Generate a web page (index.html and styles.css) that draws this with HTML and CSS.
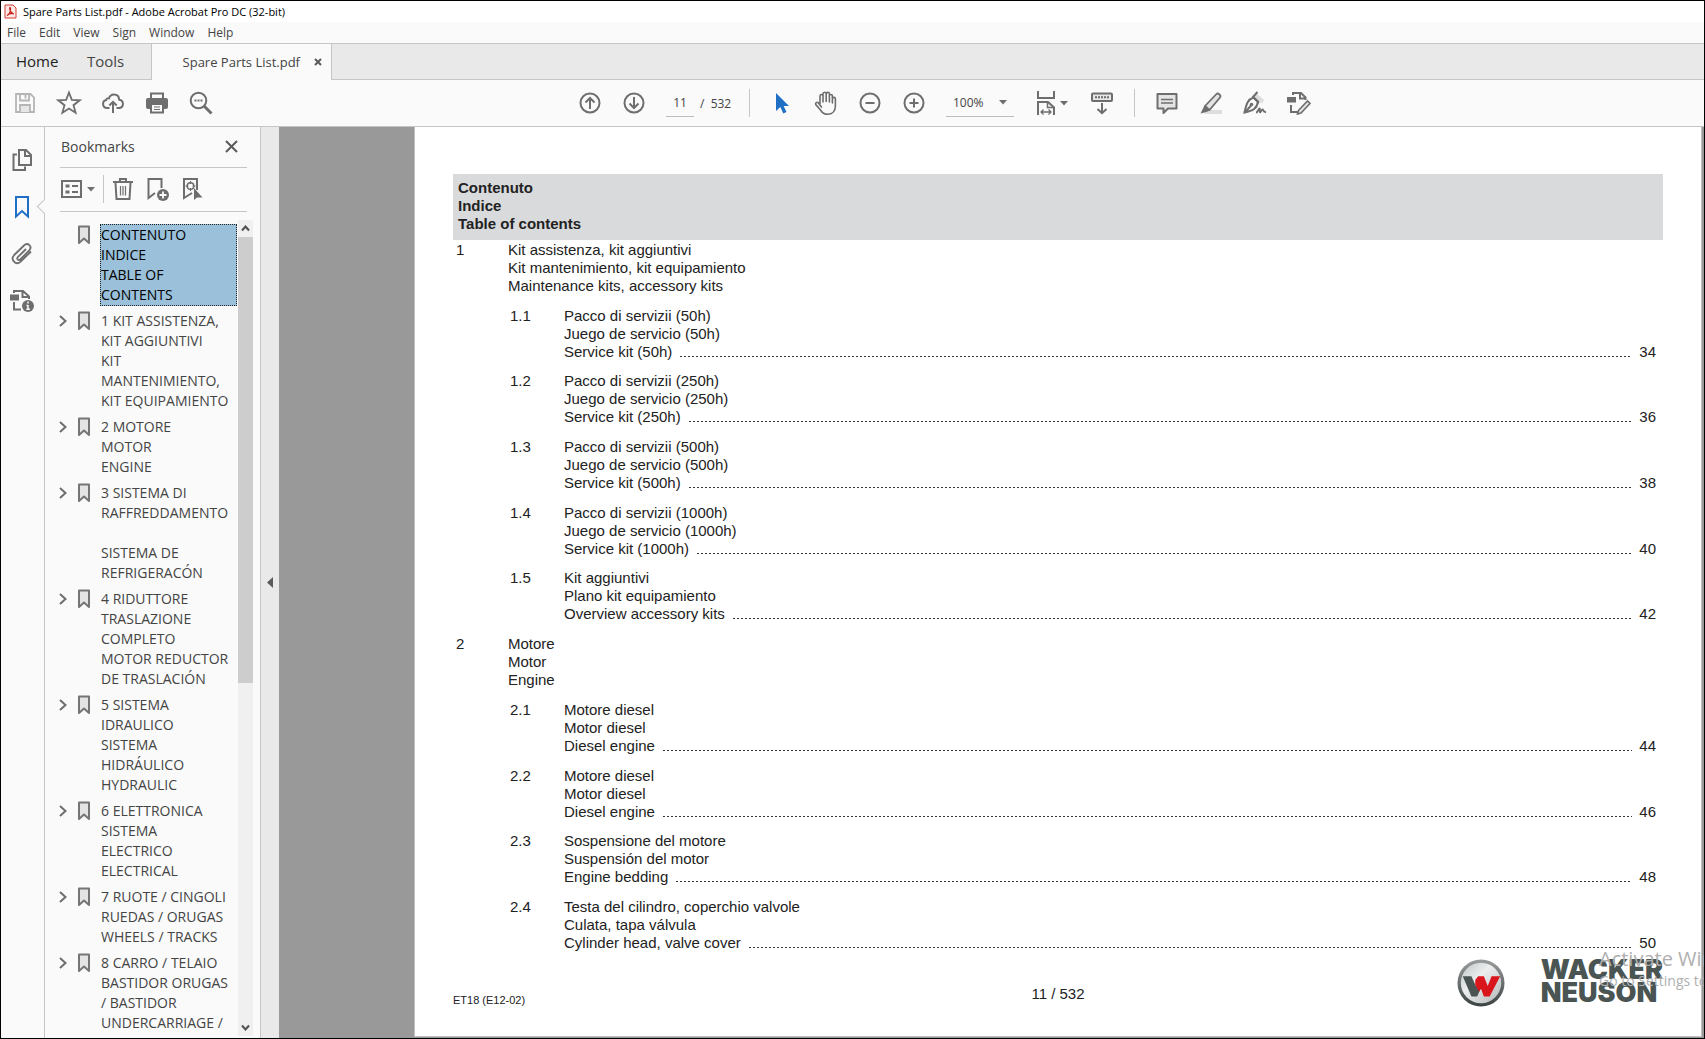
FILE: index.html
```html
<!DOCTYPE html>
<html lang="en">
<head>
<meta charset="utf-8">
<title>Spare Parts List.pdf - Adobe Acrobat Pro DC (32-bit)</title>
<link rel="stylesheet" href="styles.css">
</head>
<body>
<svg class="defs" aria-hidden="true">
  <symbol id="mark" viewBox="0 0 14 20"><path d="M2 1.5h10v16.5l-5-4.5-5 4.5z" fill="#e4e4e4" stroke="#757575" stroke-width="2" stroke-linejoin="round"/></symbol>
  <symbol id="chev" viewBox="0 0 8 12"><path d="M1 1l5.500 5L1 11" fill="none" stroke="#6e6e6e" stroke-width="2"/></symbol>
  <symbol id="caret" viewBox="0 0 8 5"><path d="M0 0h8L4 4.500z" fill="#6e6e6e"/></symbol>
</svg>

<header class="titlebar">
  <svg class="app-icon" width="13" height="15" viewBox="0 0 13 15"><path d="M1 1h8l3 3v10H1z" fill="#fbe9e7" stroke="#d33a32"/><path d="M3 11.500c2-1 3.500-4 3.500-7 0-1.500-1.200-1-.8.5.6 2.500 2.300 4.500 4.300 4.800M3 11.500c1.500-1.500 4-2.300 6.500-2" fill="none" stroke="#c8231b" stroke-width="1.200"/></svg>
  <span>Spare Parts List.pdf - Adobe Acrobat Pro DC (32-bit)</span>
</header>

<nav class="menubar">
  <button>File</button><button>Edit</button><button>View</button><button>Sign</button><button>Window</button><button>Help</button>
</nav>

<div class="tabs">
  <button class="tab home">Home</button>
  <button class="tab tools">Tools</button>
  <div class="tab-doc">
    <span>Spare Parts List.pdf</span>
    <button class="tab-close" aria-label="Close tab"><svg width="8" height="8" viewBox="0 0 8 8"><path d="M1 1l6 6M7 1L1 7" stroke="#5a5a5a" stroke-width="2"/></svg></button>
  </div>
</div>

<div class="toolbar">
  <div class="tool-group">
    <button class="tool" aria-label="Save"><svg width="24" height="24" viewBox="0 0 24 24" fill="none" stroke="#b5b5b5" stroke-width="1.800"><path d="M3 3h14.500L21 6.500V21H3z"/><path d="M7 3v6.500h9V3M12.500 4v3.500" /><path d="M7 21v-7h10v7" fill="#e6e6e6"/></svg></button>
    <button class="tool" aria-label="Star"><svg width="26" height="26" viewBox="0 0 26 26"><path d="M13 2.500l2.800 7.400 7.900.4-6.200 4.900 2.100 7.600-6.600-4.300-6.600 4.300 2.100-7.600-6.200-4.900 7.900-.4z" fill="none" stroke="#6e6e6e" stroke-width="1.800"/></svg></button>
    <button class="tool" aria-label="Upload"><svg width="24" height="24" viewBox="0 0 24 24" fill="none" stroke="#6e6e6e" stroke-width="2"><path d="M8.500 17H6a4 4 0 0 1-.8-7.900C5.500 7.500 7 7 8 7.300 8.800 4.700 10.500 3.500 13 3.500c3 0 5 2 5.200 5.200A4.200 4.200 0 0 1 18.500 17h-3"/><path d="M12 22V11M8.300 14.500L12 10.800l3.700 3.700"/></svg></button>
    <button class="tool" aria-label="Print"><svg width="24" height="24" viewBox="0 0 24 24"><path d="M6 2.500h12v6H6z" fill="#fafafa" stroke="#6e6e6e" stroke-width="2"/><rect x="1" y="7" width="22" height="11" rx="2" fill="#6e6e6e"/><rect x="6" y="13" width="12" height="8.500" fill="#fafafa" stroke="#6e6e6e" stroke-width="2"/><path d="M9 16h6M9 18.500h6" stroke="#6e6e6e"/></svg></button>
    <button class="tool" aria-label="Find"><svg width="24" height="24" viewBox="0 0 24 24" fill="none" stroke="#6e6e6e"><circle cx="9.500" cy="9.500" r="7.800" stroke-width="2"/><path d="M15 15l7.500 7.500" stroke-width="3"/><path d="M5.500 9.500h8" stroke-width="1.800" stroke-dasharray="2 1"/></svg></button>
  </div>

  <div class="tool-group main">
    <button class="tool" aria-label="Previous page"><svg width="24" height="24" viewBox="0 0 24 24" fill="none" stroke="#6e6e6e" stroke-width="2"><circle cx="12" cy="12" r="9.500"/><path d="M12 18V7M7.500 11.500L12 7l4.500 4.500"/></svg></button>
    <button class="tool" aria-label="Next page"><svg width="24" height="24" viewBox="0 0 24 24" fill="none" stroke="#6e6e6e" stroke-width="2"><circle cx="12" cy="12" r="9.500"/><path d="M12 6v11M7.500 12.500L12 17l4.500-4.500"/></svg></button>
    <input class="page-input" type="text" value="11" aria-label="Page number">
    <span class="page-total">/&nbsp; 532</span>
    <span class="sep"></span>
    <button class="tool" aria-label="Select"><svg width="24" height="24" viewBox="0 0 24 24"><path d="M6 2v18l4.300-4 3 6.500 3.200-1.500-2.900-6H19z" fill="#1f6fc4"/></svg></button>
    <button class="tool" aria-label="Pan"><svg width="24" height="26" viewBox="0 0 24 26"><path d="M6 14V6.200c0-2.200 3-2.200 3 0V12 4c0-2.300 3.200-2.300 3.200 0v7.500V4c0-2.200 3.200-2.200 3.200 0v8V6c0-2 3-2 3 0v7-4.200c0-1.900 3-1.900 3 0V16c0 5-3 8.300-7.900 8.300-3.500 0-5.500-1.800-7-4.300L1.800 14.600c-.9-1.700 1.200-3.200 2.600-1.700L7.500 17" fill="none" stroke="#6e6e6e" stroke-width="1.600" stroke-linejoin="round" stroke-linecap="round"/></svg></button>
    <button class="tool" aria-label="Zoom out"><svg width="24" height="24" viewBox="0 0 24 24" fill="none" stroke="#6e6e6e" stroke-width="2"><circle cx="12" cy="12" r="9.500"/><path d="M7.500 12h9"/></svg></button>
    <button class="tool" aria-label="Zoom in"><svg width="24" height="24" viewBox="0 0 24 24" fill="none" stroke="#6e6e6e" stroke-width="2"><circle cx="12" cy="12" r="9.500"/><path d="M7.500 12h9M12 7.500v9"/></svg></button>
    <label class="zoom"><select aria-label="Zoom level"><option>100%</option></select><svg width="8" height="5"><use href="#caret"/></svg></label>
    <button class="tool fit" aria-label="Fit width"><svg width="20" height="26" viewBox="0 0 20 26" fill="none" stroke="#6e6e6e" stroke-width="2"><path d="M2 1v7h16V1M2 25V12h10l6 5.500V25"/><path d="M11.500 12v5.500H18" stroke-width="1.500"/><path d="M5 22h10M7.500 19.500L5 22l2.500 2.500M12.500 19.500L15 22l-2.500 2.500" stroke-width="1.300"/></svg><svg width="8" height="5"><use href="#caret"/></svg></button>
    <button class="tool" aria-label="Read mode"><svg width="24" height="24" viewBox="0 0 24 24" fill="none" stroke="#6e6e6e" stroke-width="2"><rect x="2" y="2.500" width="20" height="7.500" rx="1" fill="#e6e6e6"/><path d="M5 6.200h14" stroke-dasharray="2 1"/><path d="M12 12v10M7.500 18l4.500 4.200 4.500-4.200"/></svg></button>
    <span class="sep"></span>
    <button class="tool" aria-label="Comment"><svg width="24" height="24" viewBox="0 0 24 24"><path d="M2.500 3h19v14.500H13L8.500 22v-4.500h-6z" fill="#e4e4e4" stroke="#6e6e6e" stroke-width="2" stroke-linejoin="round"/><path d="M6 8.500h12M6 12h12" stroke="#6e6e6e" stroke-width="1.500"/></svg></button>
    <button class="tool" aria-label="Highlight"><svg width="24" height="24" viewBox="0 0 24 24"><path d="M9 19h14v4H5z" fill="#dedede"/><path d="M6 15L17.500 3c1.500-1.500 5 1.500 3.500 3.500L10.500 19z" fill="#e4e4e4" stroke="#6e6e6e" stroke-width="1.800"/><path d="M5.500 14.500l5.500 4.700L7.500 21l-6 1.500z" fill="#6e6e6e"/></svg></button>
    <button class="tool" aria-label="Sign"><svg width="24" height="24" viewBox="0 0 24 24"><path d="M13 2l8 7-2 3.500-8-7z" fill="#dedede"/><path d="M10.500 6.500C4.500 8.500 3.500 13 1.500 21.500c8.500-1.500 12.500-4 13.500-11z" fill="#fafafa" stroke="#6e6e6e" stroke-width="2"/><path d="M14.500 1L10 6l6 6M2 21.500l6-7" fill="none" stroke="#6e6e6e" stroke-width="2"/><circle cx="8.500" cy="13.500" r="1.800" fill="#6e6e6e"/><path d="M13 21.500c2 0 2.500-4 3.500-4s-.5 4 .7 3.800 1.300-3 2.300-3 0 3 3.500 2.700" fill="none" stroke="#6e6e6e" stroke-width="1.800"/></svg></button>
    <button class="tool" aria-label="Edit"><svg width="24" height="24" viewBox="0 0 24 24" fill="none" stroke="#6e6e6e" stroke-width="2"><path d="M6 4V2h8l4.500 4.500V9M13 2v5.500h6M4 14v7h7"/><rect x="0" y="6" width="9" height="5.500" fill="#6e6e6e" stroke="none"/><path d="M11.500 19.500L20.500 10l2.500 2.500-9 9.500-3.500 1z" fill="#e4e4e4" stroke-width="1.600"/></svg></button>
  </div>
</div>

<main class="workspace">
  <nav class="rail">
    <button aria-label="Page thumbnails"><svg width="20" height="24" viewBox="0 0 20 24" fill="none" stroke="#6e6e6e" stroke-width="2"><path d="M7 2h7l5 5v10H7z"/><path d="M13 2v6h6M5 6.500H1.500V22H13v-3.500" /></svg></button>
    <button class="active" aria-label="Bookmarks"><svg width="16" height="24" viewBox="0 0 16 24"><path d="M2 2h12v19.500l-6-5.500-6 5.500z" fill="none" stroke="#1f6fc4" stroke-width="2"/></svg></button>
    <button aria-label="Attachments"><svg width="22" height="22" viewBox="0 0 22 22"><path d="M15 6L6.800 14.200c-1.500 1.700.7 3.800 2.400 2.300l9-9c3.600-4-1.400-8.600-5.200-5L3.200 12c-4.200 4.600 1.500 11 6.500 6.600L20 8.500" fill="none" stroke="#6e6e6e" stroke-width="1.800"/></svg></button>
    <button aria-label="Document information"><svg width="24" height="24" viewBox="0 0 24 24" fill="none" stroke="#6e6e6e" stroke-width="2"><path d="M4 4V2h9l6 5.500V10M12.500 2v6H19M4 13v7.500h7"/><rect x="0" y="5.500" width="9" height="6" fill="#6e6e6e" stroke="none"/><circle cx="18" cy="17" r="6" fill="#6e6e6e" stroke="none"/><path d="M18 16v4.500M18 12.500v2M16.500 16.500h1.500M16.300 20.300h3.600" stroke="#fafafa" stroke-width="1.500"/></svg></button>
  </nav>

  <aside class="panel">
    <div class="panel-head">
      <h2>Bookmarks</h2>
      <button aria-label="Close panel"><svg width="13" height="13" viewBox="0 0 13 13"><path d="M1 1l11 11M12 1L1 12" stroke="#5a5a5a" stroke-width="2"/></svg></button>
    </div>
    <div class="panel-tools">
      <button aria-label="Options"><svg width="21" height="18" viewBox="0 0 21 18"><rect x="1" y="1" width="19" height="16" fill="none" stroke="#6e6e6e" stroke-width="2"/><path d="M4.500 6h4M4.500 12h4" stroke="#6e6e6e" stroke-width="3"/><path d="M11 6h6M11 12h6" stroke="#6e6e6e" stroke-width="2"/></svg><svg width="8" height="5"><use href="#caret"/></svg></button>
      <span class="sep"></span>
      <button aria-label="Delete"><svg width="20" height="22" viewBox="0 0 20 22" fill="none" stroke="#6e6e6e" stroke-width="2"><path d="M0 4h20M7 3.500V1h6v2.500M2.500 5l1 16h13l1-16"/><path d="M7.500 8v9.500M10 8v9.500M12.500 8v9.500" stroke-width="1.200"/></svg></button>
      <button aria-label="New bookmark"><svg width="23" height="24" viewBox="0 0 23 24"><path d="M9 16l-6.500 5V2h13v9" fill="none" stroke="#6e6e6e" stroke-width="2"/><circle cx="17" cy="18" r="6" fill="#6e6e6e"/><path d="M13.500 18h7M17 14.500v7" stroke="#fafafa" stroke-width="1.800"/></svg></button>
      <button aria-label="Find bookmark"><svg width="21" height="24" viewBox="0 0 21 24" fill="none" stroke="#6e6e6e" stroke-width="2"><path d="M10 16l-8 5V2h13v11"/><circle cx="8.500" cy="9" r="3.300" stroke-width="1.500"/><path d="M8.500 4v3M8.500 11v3M3.500 9h3M10.500 9h3" stroke-width="1.200"/><path d="M12 11v12l3-2.500h5.500z" fill="#6e6e6e" stroke="none"/></svg></button>
    </div>
    <div class="panel-body">
      <ul class="bookmarks">
        <li><span></span><svg width="14" height="20"><use href="#mark"/></svg><a class="selected" href="#toc">CONTENUTO<br>INDICE<br>TABLE OF<br>CONTENTS</a></li>
        <li><svg width="8" height="12"><use href="#chev"/></svg><svg width="14" height="20"><use href="#mark"/></svg><a href="#toc">1 KIT ASSISTENZA,<br>KIT AGGIUNTIVI<br>KIT<br>MANTENIMIENTO,<br>KIT EQUIPAMIENTO</a></li>
        <li><svg width="8" height="12"><use href="#chev"/></svg><svg width="14" height="20"><use href="#mark"/></svg><a href="#toc">2 MOTORE<br>MOTOR<br>ENGINE</a></li>
        <li><svg width="8" height="12"><use href="#chev"/></svg><svg width="14" height="20"><use href="#mark"/></svg><a href="#toc">3 SISTEMA DI<br>RAFFREDDAMENTO<br><br>SISTEMA DE<br>REFRIGERACÓN</a></li>
        <li><svg width="8" height="12"><use href="#chev"/></svg><svg width="14" height="20"><use href="#mark"/></svg><a href="#toc">4 RIDUTTORE<br>TRASLAZIONE<br>COMPLETO<br>MOTOR REDUCTOR<br>DE TRASLACIÓN</a></li>
        <li><svg width="8" height="12"><use href="#chev"/></svg><svg width="14" height="20"><use href="#mark"/></svg><a href="#toc">5 SISTEMA<br>IDRAULICO<br>SISTEMA<br>HIDRÁULICO<br>HYDRAULIC</a></li>
        <li><svg width="8" height="12"><use href="#chev"/></svg><svg width="14" height="20"><use href="#mark"/></svg><a href="#toc">6 ELETTRONICA<br>SISTEMA<br>ELECTRICO<br>ELECTRICAL</a></li>
        <li><svg width="8" height="12"><use href="#chev"/></svg><svg width="14" height="20"><use href="#mark"/></svg><a href="#toc">7 RUOTE / CINGOLI<br>RUEDAS / ORUGAS<br>WHEELS / TRACKS</a></li>
        <li><svg width="8" height="12"><use href="#chev"/></svg><svg width="14" height="20"><use href="#mark"/></svg><a href="#toc">8 CARRO / TELAIO<br>BASTIDOR ORUGAS<br>/ BASTIDOR<br>UNDERCARRIAGE /</a></li>
      </ul>
      <div class="scrollbar">
        <button aria-label="Scroll up"><svg width="9" height="7" viewBox="0 0 9 7"><path d="M1 5.500l3.500-4 3.500 4" fill="none" stroke="#505050" stroke-width="2"/></svg></button>
        <div class="track"><div class="thumb"></div></div>
        <button aria-label="Scroll down"><svg width="9" height="7" viewBox="0 0 9 7"><path d="M1 1.500l3.500 4 3.500-4" fill="none" stroke="#505050" stroke-width="2"/></svg></button>
      </div>
    </div>
  </aside>

  <button class="splitter" aria-label="Collapse panel"><svg width="6" height="11" viewBox="0 0 6 11"><path d="M6 0v11L0 5.500z" fill="#5a5a5a"/></svg></button>

  <section class="viewer">
    <article class="page">
      <h1 class="band" id="toc">Contenuto<br>Indice<br>Table of contents</h1>
      <ol class="toc">
        <li class="chapter"><span class="num">1</span><p>Kit assistenza, kit aggiuntivi<br>Kit mantenimiento, kit equipamiento<br>Maintenance kits, accessory kits</p></li>
        <li class="entry"><span class="num">1.1</span><p>Pacco di servizii (50h)<br>Juego de servicio (50h)<span class="last">Service kit (50h)</span></p><b>34</b></li>
        <li class="entry"><span class="num">1.2</span><p>Pacco di servizii (250h)<br>Juego de servicio (250h)<span class="last">Service kit (250h)</span></p><b>36</b></li>
        <li class="entry"><span class="num">1.3</span><p>Pacco di servizii (500h)<br>Juego de servicio (500h)<span class="last">Service kit (500h)</span></p><b>38</b></li>
        <li class="entry"><span class="num">1.4</span><p>Pacco di servizii (1000h)<br>Juego de servicio (1000h)<span class="last">Service kit (1000h)</span></p><b>40</b></li>
        <li class="entry"><span class="num">1.5</span><p>Kit aggiuntivi<br>Plano kit equipamiento<span class="last">Overview accessory kits</span></p><b>42</b></li>
        <li class="chapter"><span class="num">2</span><p>Motore<br>Motor<br>Engine</p></li>
        <li class="entry"><span class="num">2.1</span><p>Motore diesel<br>Motor diesel<span class="last">Diesel engine</span></p><b>44</b></li>
        <li class="entry"><span class="num">2.2</span><p>Motore diesel<br>Motor diesel<span class="last">Diesel engine</span></p><b>46</b></li>
        <li class="entry"><span class="num">2.3</span><p>Sospensione del motore<br>Suspensión del motor<span class="last">Engine bedding</span></p><b>48</b></li>
        <li class="entry"><span class="num">2.4</span><p>Testa del cilindro, coperchio valvole<br>Culata, tapa válvula<span class="last">Cylinder head, valve cover</span></p><b>50</b></li>
      </ol>
      <footer class="page-foot">
        <span class="model">ET18 (E12-02)</span>
        <span class="folio">11 / 532</span>
        <div class="brand">
          <svg width="48" height="50" viewBox="0 0 50 50">
            <defs>
              <linearGradient id="rim" x1="0" y1="0" x2="0" y2="1"><stop offset="0" stop-color="#9a9d9d"/><stop offset="1" stop-color="#3c4242"/></linearGradient>
              <linearGradient id="face" x1="0" y1="0" x2="1" y2="1"><stop offset="0" stop-color="#bfc3c4"/><stop offset=".4" stop-color="#eceeee"/><stop offset="1" stop-color="#b4b8b9"/></linearGradient>
            </defs>
            <circle cx="25" cy="25" r="24.500" fill="url(#rim)"/><circle cx="25" cy="25" r="21" fill="url(#face)"/>
            <path d="M6 18h9l5 11 2-4 3 5-4 9h-6z" fill="#4a5553"/><path d="M19 22l3-4h6l4 10 4-10h9L34 39h-6l-3-8-2 3-4-7z" fill="#d8161c"/>
          </svg>
          <strong>WACKER<br>NEUSON</strong>
        </div>
      </footer>
    </article>
    <div class="watermark" aria-hidden="true"><p>Activate Windows</p><p class="small">Go to Settings to activate Windows.</p></div>
  </section>
</main>
</body>
</html>
```
FILE: styles.css
```css
* { box-sizing: border-box; }

body {
  margin: 0;
  height: 100vh;
  display: flex;
  flex-direction: column;
  overflow: hidden;
  border: 1px solid #000;
  background: #fafafa;
  color: #444;
  font-family: "Open Sans", "Noto Sans", sans-serif;
}

button {
  border: 0;
  padding: 0;
  background: none;
  color: inherit;
  font: inherit;
}

svg { display: block; flex: none; }
.defs { position: absolute; width: 0; height: 0; }

/* Window chrome */
.titlebar {
  display: flex;
  align-items: center;
  gap: 6px;
  height: 21px;
  flex: none;
  padding-left: 3px;
  background: #fff;
  color: #000;
  font-size: 11px;
}

.menubar {
  display: flex;
  align-items: center;
  gap: 13px;
  height: 21px;
  flex: none;
  padding-left: 6px;
  font-size: 12px;
}

.tabs {
  display: flex;
  height: 37px;
  flex: none;
  border-top: 1px solid #c6c6c6;
  background: #e9e9e9;
  font-size: 15px;
}

.tab { padding-bottom: 2px; border-bottom: 1px solid #c6c6c6; text-align: left; }
.home { width: 72px; padding-left: 15px; color: #222; }
.tools { width: 78px; padding-left: 14px; }

.tab-doc {
  display: flex;
  align-items: center;
  justify-content: flex-end;
  gap: 14px;
  width: 181px;
  padding-right: 9px;
  border: solid #c6c6c6;
  border-width: 0 1px;
  background: #fafafa;
  font-size: 13px;
}

.tabs::after { content: ""; flex: 1; border-bottom: 1px solid #c6c6c6; }

/* Toolbar */
.toolbar {
  display: flex;
  align-items: center;
  height: 47px;
  flex: none;
  padding-left: 2px;
  border-bottom: 1px solid #c6c6c6;
}

.tool-group { display: flex; align-items: center; }
.main { margin-left: 345px; }

.tool {
  display: flex;
  align-items: center;
  justify-content: center;
  width: 44px;
  height: 44px;
}

.fit { gap: 4px; width: 66px; padding-left: 10px; }

.page-input {
  width: 28px;
  height: 28px;
  margin-left: 10px;
  padding: 0;
  border: 0;
  border-bottom: 1px solid #bdbdbd;
  background: none;
  color: #444;
  font: 12px "Open Sans", sans-serif;
  text-align: center;
}

.page-total { width: 36px; margin: 0 13px 0 6px; font-size: 12px; }
.sep { width: 1px; height: 28px; background: #c6c6c6; }
.main .sep { margin: 0 10px; }
.page-total + .sep { margin-left: 0; }

.zoom {
  display: flex;
  align-items: center;
  width: 68px;
  height: 28px;
  margin-left: 10px;
  border-bottom: 1px solid #bdbdbd;
}

.zoom select {
  flex: 1;
  padding: 0 0 0 7px;
  border: 0;
  appearance: none;
  background: none;
  color: #444;
  font: 12px "Open Sans", sans-serif;
}

.zoom svg { margin-right: 7px; }

/* Work area */
.workspace { display: flex; flex: 1; min-height: 0; }

.rail { width: 44px; flex: none; padding: 9px 0; border-right: 1px solid #c6c6c6; }

.rail button {
  position: relative;
  display: flex;
  align-items: center;
  justify-content: center;
  width: 42px;
  height: 47px;
}

.rail .active::after {
  content: "";
  position: absolute;
  right: -7px;
  top: 18px;
  width: 10px;
  height: 10px;
  transform: rotate(45deg);
  border: solid #c6c6c6;
  border-width: 0 0 1px 1px;
  background: #fafafa;
}

.panel { display: flex; flex-direction: column; width: 215px; flex: none; }

.panel-head, .panel-tools {
  display: flex;
  align-items: center;
  flex: none;
  margin: 0 13px 0 15px;
  border-bottom: 1px solid #c6c6c6;
}

.panel-head { justify-content: space-between; height: 41px; padding: 0 9px 2px 1px; }
.panel-head h2 { margin: 0; font-size: 14px; font-weight: 400; }
.panel-tools { height: 44px; padding-bottom: 1px; }
.panel-tools button { display: flex; align-items: center; justify-content: center; gap: 5px; width: 35px; }
.panel-tools .sep { margin: 0 1px 0 8px; }

.panel-body { display: flex; flex: 1; min-height: 0; padding-top: 8px; }

.bookmarks {
  flex: 1;
  min-width: 0;
  margin: 0;
  padding: 4px 0 0 14px;
  overflow: hidden;
  list-style: none;
  font-size: 14px;
  line-height: 20px;
}

.bookmarks li {
  display: grid;
  grid-template-columns: 18px 23px 1fr;
  margin-bottom: 4px;
  align-items: start;
}

.bookmarks svg { margin-top: 1px; }
.bookmarks svg:first-child { margin-top: 5px; }

.bookmarks a {
  border: 1px dotted transparent;
  color: inherit;
  text-decoration: none;
  white-space: nowrap;
}

.bookmarks .selected { border-color: #222; background: #9ac0da; color: #000; }

.scrollbar { display: flex; flex-direction: column; width: 15px; flex: none; margin: 0 7px 2px 1px; background: #f0f0f0; }
.scrollbar button { display: flex; align-items: center; justify-content: center; height: 17px; }
.track { flex: 1; }
.thumb { height: 57%; background: #cdcdcd; }

.splitter {
  display: flex;
  align-items: center;
  justify-content: center;
  width: 19px;
  flex: none;
  border-left: 1px solid #c6c6c6;
  background: #e9e9e9;
}

/* Document */
.viewer {
  position: relative;
  flex: 1;
  min-width: 0;
  padding: 0 2px 1px 135px;
  overflow: hidden;
  background: #999;
}

.page {
  display: flex;
  flex-direction: column;
  height: 100%;
  padding: 47px 38px 23px;
  border: solid #c0c0c0;
  border-width: 0 1px 1px;
  background: #fff;
  color: #222;
  font-family: "Liberation Sans", Arial, sans-serif;
  font-size: 15px;
  line-height: 18px;
}

.band {
  margin: 0;
  padding: 5px 5px 7px;
  background: #d9dadc;
  font-size: 15px;
  line-height: 18px;
}

.toc {
  display: flex;
  flex: 1;
  flex-direction: column;
  justify-content: space-between;
  margin: 0;
  padding: 1px 7px 0 3px;
  list-style: none;
}

.toc li { display: flex; }
.toc p { flex: 1; margin: 0; white-space: nowrap; }
.toc b { align-self: flex-end; font-weight: 400; }
.num { width: 52px; }
.entry { padding-left: 54px; }
.entry .num { width: 54px; }

.last { display: flex; align-items: flex-end; gap: 8px; }

.last::after {
  content: "";
  flex: 1;
  height: 1px;
  margin: 0 7px 4px 0;
  background: repeating-linear-gradient(90deg, #333 0 2px, transparent 2px 4px);
}

.page-foot { display: flex; align-items: center; height: 61px; flex: none; }
.page-foot > span { flex: 1; padding-top: 22px; }
.page-foot .model { padding-top: 34px; font-size: 11px; }
.page-foot .folio { flex: none; text-align: center; }
.brand { display: flex; flex: 1; justify-content: flex-end; gap: 36px; }

.brand strong {
  color: #4a5553;
  font: 900 27px/23px Inter, sans-serif;
}

.watermark {
  position: absolute;
  left: calc(100% - 105px);
  bottom: 47px;
  color: #b0b0b0;
  white-space: nowrap;
}

.watermark p { margin: 0; font-size: 20px; line-height: 25px; }
.watermark .small { font-size: 14px; line-height: 20px; }
```
